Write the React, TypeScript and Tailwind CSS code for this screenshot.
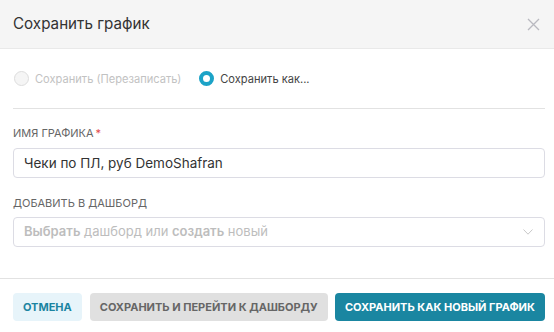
import React from "react";

export default function App() {
  return (
    <div
      className="w-[554px] h-[332px] bg-white flex flex-col overflow-hidden"
      style={{ fontFamily: "Inter, 'Noto Sans', sans-serif" }}
    >
      <div className="h-[49px] shrink-0 bg-[#f5f5f5] border-b border-[#e9e9e9] flex items-center justify-between pl-[13px] pr-[14px]">
        <span className="text-[15.2px] text-[#333] leading-none">Сохранить график</span>
        <svg width="13" height="13" viewBox="0 0 13 13" className="mt-[1px]">
          <path d="M1 1 L12 12 M12 1 L1 12" stroke="#b9b9c0" strokeWidth="1.3" fill="none" />
        </svg>
      </div>

      <div className="pl-[13px] pr-[9px] flex flex-col">
        <div className="h-[60px] flex items-center border-b border-[#e2e2e2] pt-[1px]">
          <div className="flex items-center">
            <span className="w-[15px] h-[15px] rounded-full border border-[#ddd] bg-[#f5f5f5] ml-[1px]" />
            <span className="ml-[6px] text-[11.1px] text-[#c2c2c2]">Сохранить (Перезаписать)</span>
          </div>
          <div className="flex items-center ml-[18px]">
            <span className="w-[15px] h-[15px] rounded-full border-[4px] border-[#1ca3c7] bg-white" />
            <span className="ml-[6px] text-[11.1px] text-[#444]">Сохранить как...</span>
          </div>
        </div>

        <div className="mt-[17px] text-[11px] leading-[14px] text-[#666] uppercase">
          Имя графика<span className="text-[#e24a4a] ml-[2px]">*</span>
        </div>
        <div className="mt-[8px] h-[30px] border border-[#dcdce4] rounded-[4px] flex items-center px-[10px] text-[13.5px] text-[#333]">
          Чеки по ПЛ, руб DemoShafran
        </div>

        <div className="mt-[18px] text-[11px] leading-[14px] text-[#666] uppercase">
          Добавить в дашборд
        </div>
        <div className="mt-[7px] h-[30px] border border-[#dcdce4] rounded-[4px] flex items-center justify-between pl-[10px] pr-[11px] text-[13px] text-[#bdbdbd]">
          <span>
            <b className="font-semibold">Выбрать</b> дашборд или <b className="font-semibold">создать</b> новый
          </span>
          <svg width="10" height="6" viewBox="0 0 10 6">
            <path d="M0.5 0.5 L5 5.2 L9.5 0.5" stroke="#c8c8c8" strokeWidth="1" fill="none" />
          </svg>
        </div>
      </div>

      <div className="mt-[31px] border-t border-[#e2e2e2] pl-[13px] pr-[9px] pt-[14px] flex gap-[7px]">
        <button className="w-[69px] h-[28px] rounded-[4px] bg-[#e7f4fa] text-[#1b84a1] text-[11px] font-bold uppercase whitespace-nowrap flex items-center justify-center">
          Отмена
        </button>
        <button className="w-[239px] h-[28px] ml-[1px] rounded-[4px] bg-[#e0e0e0] text-[#666] text-[11px] font-bold uppercase whitespace-nowrap flex items-center justify-center">
          Сохранить и перейти к дашборду
        </button>
        <button className="w-[211px] h-[28px] rounded-[4px] bg-[#1a86a1] text-white text-[11px] font-bold uppercase whitespace-nowrap flex items-center justify-center">
          Сохранить как новый график
        </button>
      </div>
    </div>
  );
}
